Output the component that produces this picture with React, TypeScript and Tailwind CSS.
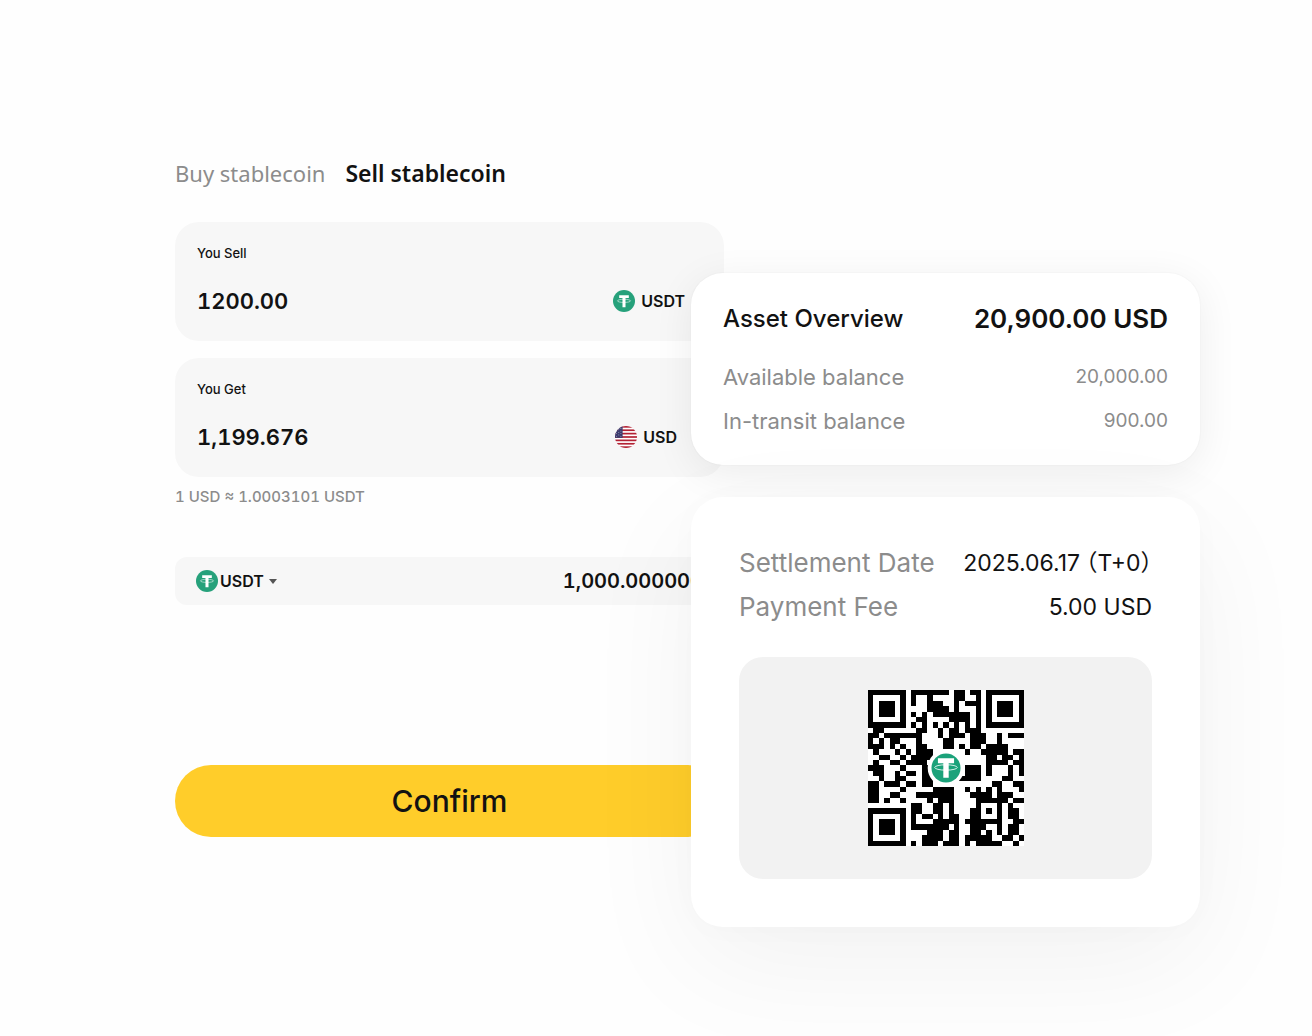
import type { ReactNode } from 'react'

const QR_ROWS = [
  '11111110111111101101101111111',
  '10000010100100001100101000001',
  '10111010100111001011101011101',
  '10111010000111101000101011101',
  '10111010101011111110101011101',
  '10000010011000011110101000001',
  '11111110101010101010101111111',
  '01100000011001011011100000000',
  '11011111110001011101110010111',
  '10101100010000110001110010000',
  '11101010011000110101101111000',
  '01000101011100000010011111011',
  '00110010111100000000001101101',
  '01001101111000000000001111011',
  '11100010001100000011101000101',
  '01100101101100000011101000101',
  '00100110001100000111100001100',
  '11011101101100000000000110011',
  '11000010000011110010101010001',
  '11001100011111110001111011100',
  '11010010000101110000111111011',
  '00000000110011010000100010100',
  '11111110110011010001101010110',
  '10000010101101011001100010110',
  '10111010100011111011111110011',
  '10111010111111101001110010110',
  '10111010000111011001101010110',
  '10000010001111011011111001101',
  '11111110101110111010111110010',
]

function TetherIcon({ className }: { className?: string }) {
  return (
    <svg viewBox="0 0 32 32" className={className} aria-hidden="true">
      <circle cx="16" cy="16" r="16" fill="#26a17b" />
      <path d="M9 7.5h14v4.2h-4.8v13.3h-4.4V11.7H9z" fill="#fff" />
      <ellipse cx="16" cy="15.8" rx="9.6" ry="2.3" fill="none" stroke="#fff" strokeWidth="0.8" />
    </svg>
  )
}

function UsFlagIcon({ className }: { className?: string }) {
  return (
    <svg viewBox="0 0 26 26" className={className} aria-hidden="true">
      <clipPath id="flag-clip">
        <circle cx="13" cy="13" r="13" />
      </clipPath>
      <g clipPath="url(#flag-clip)">
        <rect width="26" height="26" fill="#fff" />
        {[0, 4, 8, 12, 16, 20, 24].map((y) => (
          <rect key={y} y={y} width="26" height="2" fill="#b22234" />
        ))}
        <rect width="9" height="14" fill="#3c3b6e" />
        {[3, 6, 9, 12].map((y) => (
          <g key={y} fill="#fff">
            <circle cx="2" cy={y} r="0.5" />
            <circle cx="4.5" cy={y - 1.5} r="0.5" />
            <circle cx="7" cy={y} r="0.5" />
          </g>
        ))}
      </g>
    </svg>
  )
}

function QrCode() {
  return (
    <svg
      viewBox="0 0 290 290"
      className="size-[156px] bg-white"
      shapeRendering="crispEdges"
      role="img"
      aria-label="USDT payment QR code"
    >
      {QR_ROWS.map((row, y) =>
        row
          .split('')
          .map((cell, x) =>
            cell === '1' ? (
              <rect key={`${x}-${y}`} x={x * 10} y={y * 10} width="10" height="10" />
            ) : null,
          ),
      )}
      <g shapeRendering="geometricPrecision">
        <circle cx="145" cy="145" r="34" fill="#fff" />
        <circle cx="145" cy="145" r="27" fill="#1ba27a" />
        <path d="M130 127h30v9h-10v27h-10v-27h-10z" fill="#fff" />
        <ellipse cx="145" cy="144" rx="21" ry="5" fill="none" stroke="#fff" strokeWidth="1.5" />
      </g>
    </svg>
  )
}

interface AmountFieldProps {
  id: string
  label: string
  value: string
  currency: string
  icon: ReactNode
  currencyClass: string
}

function AmountField({ id, label, value, currency, icon, currencyClass }: AmountFieldProps) {
  return (
    <div className="rounded-3xl bg-[#f7f7f7] px-[22px] pt-[21px] pb-6">
      <label htmlFor={id} className="block text-[13px] leading-5 font-medium">
        {label}
      </label>
      <div className="mt-[22px] flex h-8 items-center justify-between">
        <input
          id={id}
          defaultValue={value}
          className="w-48 bg-transparent text-[22px] leading-8 font-semibold tabular-nums outline-none"
        />
        <div className={`flex items-center gap-[6px] ${currencyClass}`}>
          {icon}
          <span className="text-[16px] leading-6 font-semibold">{currency}</span>
        </div>
      </div>
    </div>
  )
}

function SellForm() {
  return (
    <form className="min-w-0" onSubmit={(e) => e.preventDefault()}>
      <div className="flex gap-5 font-['Noto_Sans',sans-serif] text-[23px] leading-8">
        <button type="button" className="text-[22px] text-[#8c8c8c]">
          Buy stablecoin
        </button>
        <button type="button" className="font-semibold">
          Sell stablecoin
        </button>
      </div>

      <div className="mt-[33px] flex flex-col gap-[17px]">
        <AmountField
          id="sell-amount"
          label="You Sell"
          value="1200.00"
          currency="USDT"
          icon={<TetherIcon className="size-[22px]" />}
          currencyClass="mr-[17px]"
        />
        <AmountField
          id="get-amount"
          label="You Get"
          value="1,199.676"
          currency="USD"
          icon={<UsFlagIcon className="size-[22px]" />}
          currencyClass="mr-[25px]"
        />
      </div>
      <p className="mt-[10px] text-[15px] leading-5 font-medium text-[#8c8c8c] tabular-nums">
        1 USD ≈ 1.0003101 USDT
      </p>

      <div className="mt-[50px] flex h-12 items-center rounded-xl bg-[#f7f7f7] px-[21px]">
        <TetherIcon className="size-[22px] shrink-0" />
        <div className="relative ml-[2px] flex items-center">
          <select
            aria-label="Currency"
            className="w-[60px] appearance-none bg-transparent text-[16px] leading-6 font-semibold outline-none"
          >
            <option>USDT</option>
          </select>
          <svg
            viewBox="0 0 8 5"
            className="pointer-events-none absolute right-[3px] h-[5px] w-2"
            aria-hidden="true"
          >
            <path d="M0 0h8L4 5z" fill="#555" />
          </svg>
        </div>
        <input
          aria-label="Amount"
          defaultValue="1,000.000000"
          className="min-w-0 flex-1 bg-transparent text-right text-[20px] leading-8 font-semibold tabular-nums outline-none"
        />
      </div>

      <button
        type="submit"
        className="mt-40 h-[72px] w-full rounded-full bg-[#ffcd2a] text-[30px] font-medium"
      >
        Confirm
      </button>
    </form>
  )
}

function AssetOverview() {
  return (
    <section className="rounded-[32px] bg-white px-8 py-7 shadow-[0_8px_40px_rgba(0,0,0,0.07),0_0_2px_rgba(0,0,0,0.06)]">
      <div className="flex items-center justify-between leading-9">
        <h2 className="text-[24px] font-medium">Asset Overview</h2>
        <strong className="text-[26px] font-semibold">20,900.00 USD</strong>
      </div>
      <dl className="mt-6 flex flex-col gap-3 text-[22px] leading-8 text-[#8c8c8c]">
        <div className="flex justify-between">
          <dt>Available balance</dt>
          <dd className="text-[19px]">20,000.00</dd>
        </div>
        <div className="flex justify-between">
          <dt>In-transit balance</dt>
          <dd className="text-[19px]">900.00</dd>
        </div>
      </dl>
    </section>
  )
}

function Settlement() {
  return (
    <section className="rounded-[32px] bg-white px-12 pt-[50px] pb-12 shadow-[0_36px_120px_rgba(0,0,0,0.05),0_2px_32px_rgba(0,0,0,0.02)]">
      <dl className="flex flex-col gap-3 text-[26px] leading-8">
        <div className="flex justify-between">
          <dt className="text-[#8c8c8c]">Settlement Date</dt>
          <dd className="flex text-[23px]">
            <span>2025.06.17</span>
            <span className="ml-[6px] [font-feature-settings:'halt']">（T+0）</span>
          </dd>
        </div>
        <div className="flex justify-between">
          <dt className="text-[#8c8c8c]">Payment Fee</dt>
          <dd className="text-[23px]">5.00 USD</dd>
        </div>
      </dl>
      <div className="mt-[34px] flex justify-center rounded-3xl bg-[#f2f2f2] py-[33px]">
        <QrCode />
      </div>
    </section>
  )
}

export default function App() {
  return (
    <main className="grid min-h-screen grid-cols-[minmax(0,549fr)_minmax(0,476fr)] items-start overflow-hidden bg-[#fefefe] pt-[157px] pr-[112px] pl-[175px] font-['Inter','Noto_Sans_CJK_SC',sans-serif] text-[#121212]">
      <SellForm />
      <aside className="relative -ml-[33px] flex min-w-0 flex-col gap-8 pt-[116px]">
        <AssetOverview />
        <Settlement />
      </aside>
    </main>
  )
}
